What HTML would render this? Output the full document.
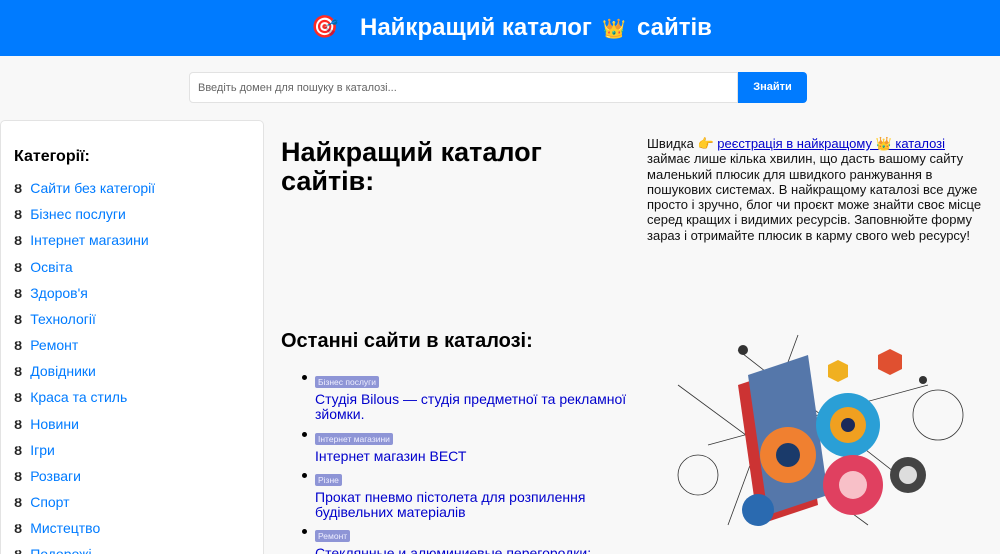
<!DOCTYPE html>
<html style="overflow:hidden"><head><meta charset="utf-8"><style>
html,body{overflow:hidden;height:554px}
body{margin:0;background:#f8f8f8;font-family:"Liberation Sans",Arial,sans-serif;width:1000px;position:relative}
.hd{position:absolute;left:0;top:0;width:1000px;height:56px;background:#007bff;color:#fff;font-weight:bold;font-size:24px}
.hd span{position:absolute;top:14px}
.inp{position:absolute;left:189px;top:72px;width:549px;height:31px;background:#fff;border:1px solid #e2e2e2;border-radius:4px 0 0 4px;box-sizing:border-box;font-size:11px;color:#666;padding:9px 8px}
.btn{position:absolute;left:738px;top:72px;width:69px;height:31px;background:#007bff;color:#fff;font-size:11px;font-weight:bold;text-align:center;line-height:31px;border-radius:0 4px 4px 0}
.sb{position:absolute;left:0;top:120px;width:264px;height:434px;overflow:hidden;background:#fff;border:1px solid #e3e3e3;border-bottom:none;border-radius:5px 5px 0 0;box-sizing:border-box}
.sb h3{position:absolute;left:13px;top:27px;margin:0;font-size:16px}
.sb .it{position:absolute;left:13px;font-size:14px;color:#007bff;white-space:nowrap}
.sb .it b{color:#222;font-weight:bold;margin-right:8px;font-size:13px}
h1{position:absolute;left:281px;top:138px;margin:0;font-size:27px;line-height:29px}
.p{position:absolute;left:647px;top:136px;width:340px;font-size:13px;line-height:15.3px;color:#111}
.p a{color:#00c;text-decoration:underline}
h2{position:absolute;left:281px;top:330px;margin:0;font-size:20px}
ul{position:absolute;left:315px;top:372px;margin:0;padding:0;width:320px;list-style:none}
li{position:relative;margin-bottom:6px}
li:before{content:"";position:absolute;left:-13px;top:3px;width:5px;height:5px;border-radius:50%;background:#000}
.tg{display:inline-block;background:#8e95d6;color:#eef;font-size:8.5px;padding:1px 3px;border-radius:2px;line-height:10px}
li a{display:block;color:#00c;font-size:14px;line-height:15.3px;margin-top:2px}
</style></head><body>
<div class="hd"><span style="left:311px;font-size:22px">🎯</span><span style="left:360px">Найкращий каталог</span><span style="left:602px;font-size:19px;top:17px">👑</span><span style="left:637px">сайтів</span></div>
<div class="inp">Введіть домен для пошуку в каталозі...</div><div class="btn">Знайти</div>
<div class="sb"><h3>Категорії:</h3>
<div class="it" style="top:59px"><b>Ȣ</b>Сайти без категорії</div>
<div class="it" style="top:85px"><b>Ȣ</b>Бізнес послуги</div>
<div class="it" style="top:111px"><b>Ȣ</b>Інтернет магазини</div>
<div class="it" style="top:138px"><b>Ȣ</b>Освіта</div>
<div class="it" style="top:164px"><b>Ȣ</b>Здоров'я</div>
<div class="it" style="top:190px"><b>Ȣ</b>Технології</div>
<div class="it" style="top:216px"><b>Ȣ</b>Ремонт</div>
<div class="it" style="top:242px"><b>Ȣ</b>Довідники</div>
<div class="it" style="top:268px"><b>Ȣ</b>Краса та стиль</div>
<div class="it" style="top:295px"><b>Ȣ</b>Новини</div>
<div class="it" style="top:321px"><b>Ȣ</b>Ігри</div>
<div class="it" style="top:347px"><b>Ȣ</b>Розваги</div>
<div class="it" style="top:373px"><b>Ȣ</b>Спорт</div>
<div class="it" style="top:399px"><b>Ȣ</b>Мистецтво</div>
<div class="it" style="top:425px"><b>Ȣ</b>Подорожі</div>
</div>
<h1>Найкращий каталог<br>сайтів:</h1>
<div class="p">Швидка 👉 <a>реєстрація в найкращому 👑 каталозі</a> займає лише кілька хвилин, що дасть вашому сайту маленький плюсик для швидкого ранжування в пошукових системах. В найкращому каталозі все дуже просто і зручно, блог чи проєкт може знайти своє місце серед кращих і видимих ресурсів. Заповнюйте форму зараз і отримайте плюсик в карму свого web ресурсу!</div>
<h2>Останні сайти в каталозі:</h2>
<ul>
<li><span class="tg">Бізнес послуги</span><a>Студія Bilous — студія предметної та рекламної зйомки.</a></li>
<li><span class="tg">Інтернет магазини</span><a>Інтернет магазин ВЕСТ</a></li>
<li><span class="tg">Різне</span><a>Прокат пневмо пістолета для розпилення будівельних матеріалів</a></li>
<li><span class="tg">Ремонт</span><a>Стеклянные и алюминиевые перегородки:</a></li>
</ul>
<svg style="position:absolute;left:668px;top:325px" width="300" height="229" viewBox="0 0 300 229">
<g stroke="#333" stroke-width="0.8" fill="none"><line x1="10" y1="60" x2="200" y2="200"/><line x1="70" y1="25" x2="230" y2="150"/><line x1="130" y1="10" x2="60" y2="200"/><line x1="260" y1="60" x2="40" y2="120"/><circle cx="270" cy="90" r="25"/><circle cx="30" cy="150" r="20"/></g>
<polygon points="70,60 130,40 150,180 90,200" fill="#c33"/>
<polygon points="80,50 140,30 160,170 100,190" fill="#5577aa"/>
<circle cx="180" cy="100" r="32" fill="#2a9fd6"/><circle cx="180" cy="100" r="18" fill="#f0a020"/><circle cx="180" cy="100" r="7" fill="#1a2a5a"/>
<circle cx="185" cy="160" r="30" fill="#e04060"/><circle cx="185" cy="160" r="14" fill="#f8c0c8"/>
<circle cx="120" cy="130" r="28" fill="#f08030"/><circle cx="120" cy="130" r="12" fill="#1a3a6a"/>
<circle cx="240" cy="150" r="18" fill="#444"/><circle cx="240" cy="150" r="9" fill="#ddd"/>
<circle cx="90" cy="185" r="16" fill="#2a6ab0"/>
<polygon points="210,30 222,24 234,30 234,44 222,50 210,44" fill="#e05030"/>
<polygon points="160,40 170,35 180,40 180,52 170,57 160,52" fill="#f0b020"/>
<circle cx="75" cy="25" r="5" fill="#333"/><circle cx="255" cy="55" r="4" fill="#333"/>
</svg>
</body></html>
